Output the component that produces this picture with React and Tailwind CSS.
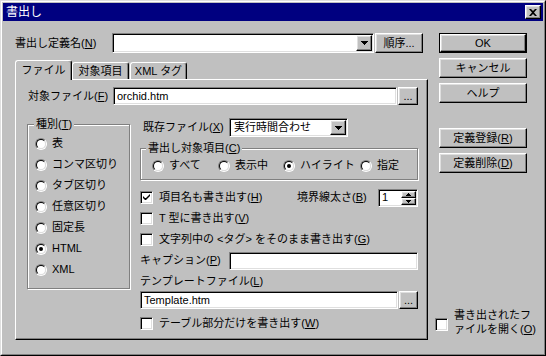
const sunken =
  'bg-white border border-t-[#808080] border-l-[#808080] border-r-white border-b-white shadow-[inset_1px_1px_0_#000,inset_-1px_-1px_0_#dfdfdf]';

function Btn({ className = '', children }) {
  return (
    <div
      className={`flex items-center justify-center bg-[#c0c0c0] border border-t-white border-l-white border-r-black border-b-black shadow-[inset_-1px_-1px_0_#808080,inset_1px_1px_0_#dfdfdf] ${className}`}
    >
      {children}
    </div>
  );
}

function DownArrow() {
  return (
    <svg width="7" height="4" viewBox="0 0 7 4">
      <path d="M0 0h7v1h-1v1h-1v1h-1v1h-1v-1h-1v-1h-1v-1h-1z" fill="#000" />
    </svg>
  );
}

function Combo({ className = '', value }) {
  return (
    <div className={`${sunken} flex p-px ${className}`}>
      <div className="flex-1 flex items-center pl-[3px]">{value}</div>
      <Btn className="w-[16px]">
        <DownArrow />
      </Btn>
    </div>
  );
}

function Radio({ checked }) {
  return (
    <div className="w-[12px] h-[12px] shrink-0 rounded-full border border-t-[#808080] border-l-[#808080] border-r-white border-b-white">
      <div className="w-full h-full rounded-full bg-white border border-t-black border-l-black border-r-[#dfdfdf] border-b-[#dfdfdf] flex items-center justify-center">
        {checked && <div className="w-[4px] h-[4px] rounded-full bg-black" />}
      </div>
    </div>
  );
}

function Check({ checked, className = '' }) {
  return (
    <div className={`w-[13px] h-[13px] shrink-0 flex items-center justify-center ${sunken} ${className}`}>
      {checked && (
        <svg width="9" height="9" viewBox="0 0 9 9">
          <path d="M1 3v2l2 2h1l4-4v-2l-4 4h-1z" fill="#000" />
        </svg>
      )}
    </div>
  );
}

function Group({ label, className = '', children }) {
  return (
    <div className={`border border-[#808080] shadow-[1px_1px_0_#fff,inset_1px_1px_0_#fff] ${className}`}>
      {label}
      {children}
    </div>
  );
}

function Tab({ selected, className = '', children }) {
  return (
    <div
      className={`flex items-center justify-center bg-[#c0c0c0] border-t border-l border-r border-t-white border-l-white border-r-black rounded-t-[3px] shadow-[inset_-1px_0_0_#808080] ${
        selected ? 'relative z-10 -mb-px h-[20px]' : 'h-[17px]'
      } ${className}`}
    >
      {children}
    </div>
  );
}

export default function App() {
  const kinds = ['表', 'コンマ区切り', 'タブ区切り', '任意区切り', '固定長', 'HTML', 'XML'];

  return (
    <div className="w-[546px] h-[356px] bg-[#c0c0c0] border border-t-[#dfdfdf] border-l-[#dfdfdf] border-r-black border-b-black font-['Liberation_Sans','Noto_Sans_CJK_JP',sans-serif] text-[11px] leading-[13px] text-black">
      <div className="h-full border border-t-white border-l-white border-r-[#808080] border-b-[#808080] p-px flex flex-col">
        {/* title bar */}
        <div className="h-[18px] bg-[#000080] flex items-center pl-[3px] pr-[2px]">
          <span className="flex-1 text-white text-[12px]">書出し</span>
          <Btn className="w-[16px] h-[14px]">
            <svg width="8" height="7" viewBox="0 0 8 7">
              <path d="M0 0h2l2 2 2-2h2l-3 3.5 3 3.5h-2l-2-2-2 2h-2l3-3.5z" fill="#000" />
            </svg>
          </Btn>
        </div>

        <div className="flex flex-1 pt-[12px] pl-[12px]">
          {/* left column */}
          <div className="w-[413px] flex flex-col">
            <div className="flex items-center h-[20px]">
              <span className="w-[97px]">
                書出し定義名(<u>N</u>)
              </span>
              <Combo className="w-[262px] h-[20px]" />
              <Btn className="ml-px w-[48px] h-[20px]">順序...</Btn>
            </div>

            {/* tabs */}
            <div className="flex items-end mt-[7px]">
              <Tab selected className="w-[57px]">ファイル</Tab>
              <Tab className="w-[57px]">対象項目</Tab>
              <Tab className="ml-px w-[57px]">XML タグ</Tab>
            </div>

            {/* tab panel */}
            <div className="h-[261px] border border-t-white border-l-white border-r-black border-b-black shadow-[inset_-1px_-1px_0_#808080] pl-[11px] pr-[9px] pt-[7px]">
              <div className="flex items-center h-[18px]">
                <span className="w-[86px] pl-px">
                  対象ファイル(<u>F</u>)
                </span>
                <div className={`${sunken} flex-1 h-[18px] flex items-center pl-[3px]`}>orchid.htm</div>
                <Btn className="ml-px w-[20px] h-[18px]">...</Btn>
              </div>

              <div className="flex items-start mt-[13px]">
                {/* 種別 */}
                <Group
                  className="mt-[6px] w-[103px] h-[165px]"
                  label={
                    <div className="-mt-[7px] ml-[6px] w-fit px-[2px] bg-[#c0c0c0]">
                      種別(<u>T</u>)
                    </div>
                  }
                >
                  <div className="pt-[2px] pl-[7px]">
                    {kinds.map((k) => (
                      <div key={k} className="h-[21px] flex items-center gap-[5px]">
                        <Radio checked={k === 'HTML'} />
                        <span>{k}</span>
                      </div>
                    ))}
                  </div>
                </Group>

                {/* right side of panel */}
                <div className="ml-[10px] w-[278px] flex flex-col">
                  <div className="flex items-center h-[19px]">
                    <span className="w-[89px] pl-[3px]">
                      既存ファイル(<u>X</u>)
                    </span>
                    <Combo className="w-[119px] h-[19px]" value="実行時間合わせ" />
                  </div>

                  <Group
                    className="mt-[11px] pb-[3px]"
                    label={
                      <div className="-mt-[7px] ml-[5px] w-fit px-[2px] bg-[#c0c0c0]">
                        書出し対象項目(<u>C</u>)
                      </div>
                    }
                  >
                    <div className="flex items-center h-[21px] pl-[11px]">
                      <div className="w-[66px] flex items-center gap-[5px]">
                        <Radio />
                        すべて
                      </div>
                      <div className="w-[65px] flex items-center gap-[5px]">
                        <Radio />
                        表示中
                      </div>
                      <div className="w-[77px] flex items-center gap-[5px]">
                        <Radio checked />
                        ハイライト
                      </div>
                      <div className="flex items-center gap-[5px]">
                        <Radio />
                        指定
                      </div>
                    </div>
                  </Group>

                  <div className="mt-[7px] h-[21px] flex items-center">
                    <div className="w-[157px] flex items-center">
                      <Check checked />
                      <span className="ml-[6px]">
                        項目名も書き出す(<u>H</u>)
                      </span>
                    </div>
                    <span className="w-[81px]">
                      境界線太さ(<u>B</u>)
                    </span>
                    <div className={`${sunken} w-[40px] h-[18px] p-px flex`}>
                      <div className="flex-1 flex items-center pl-[2px]">1</div>
                      <div className="w-[15px] flex flex-col">
                        <Btn className="flex-1">
                          <svg width="5" height="3" viewBox="0 0 5 3">
                            <path d="M2 0h1v1h1v1h1v1h-5v-1h1v-1h1z" fill="#000" />
                          </svg>
                        </Btn>
                        <Btn className="flex-1">
                          <svg width="5" height="3" viewBox="0 0 5 3">
                            <path d="M0 0h5v1h-1v1h-1v1h-1v-1h-1v-1h-1z" fill="#000" />
                          </svg>
                        </Btn>
                      </div>
                    </div>
                  </div>

                  <div className="h-[21px] flex items-center">
                    <Check />
                    <span className="ml-[6px]">
                      T 型に書き出す(<u>V</u>)
                    </span>
                  </div>

                  <div className="h-[21px] flex items-center">
                    <Check />
                    <span className="ml-[6px]">
                      文字列中の &lt;タグ&gt; をそのまま書き出す(<u>G</u>)
                    </span>
                  </div>

                  <div className="h-[21px] flex items-center">
                    <span className="w-[89px]">
                      キャプション(<u>P</u>)
                    </span>
                    <div className={`${sunken} flex-1 h-[18px]`} />
                  </div>

                  <div className="h-[20px] flex items-center">
                    テンプレートファイル(<u>L</u>)
                  </div>

                  <div className="flex h-[18px]">
                    <div className={`${sunken} w-[258px] flex items-center pl-[3px]`}>Template.htm</div>
                    <Btn className="ml-px w-[19px]">...</Btn>
                  </div>

                  <div className="mt-[4px] h-[21px] flex items-center">
                    <Check />
                    <span className="ml-[6px]">
                      テーブル部分だけを書き出す(<u>W</u>)
                    </span>
                  </div>
                </div>
              </div>
            </div>
          </div>

          {/* right buttons */}
          <div className="ml-[11px] w-[88px] flex flex-col">
            <div className="h-[20px] border border-black flex">
              <Btn className="flex-1">OK</Btn>
            </div>
            <Btn className="mt-[5px] h-[20px]">キャンセル</Btn>
            <Btn className="mt-[5px] h-[20px]">ヘルプ</Btn>
            <Btn className="mt-[25px] h-[20px]">
              定義登録(<u>R</u>)
            </Btn>
            <Btn className="mt-[5px] h-[20px]">
              定義削除(<u>D</u>)
            </Btn>
            <div className="mt-auto mb-[17px] -ml-[4px] flex items-center">
              <Check className="mt-[4px]" />
              <span className="ml-[6px] leading-[14px] whitespace-nowrap">
                書き出されたフ
                <br />
                ァイルを開く(<u>O</u>)
              </span>
            </div>
          </div>
        </div>
      </div>
    </div>
  );
}
